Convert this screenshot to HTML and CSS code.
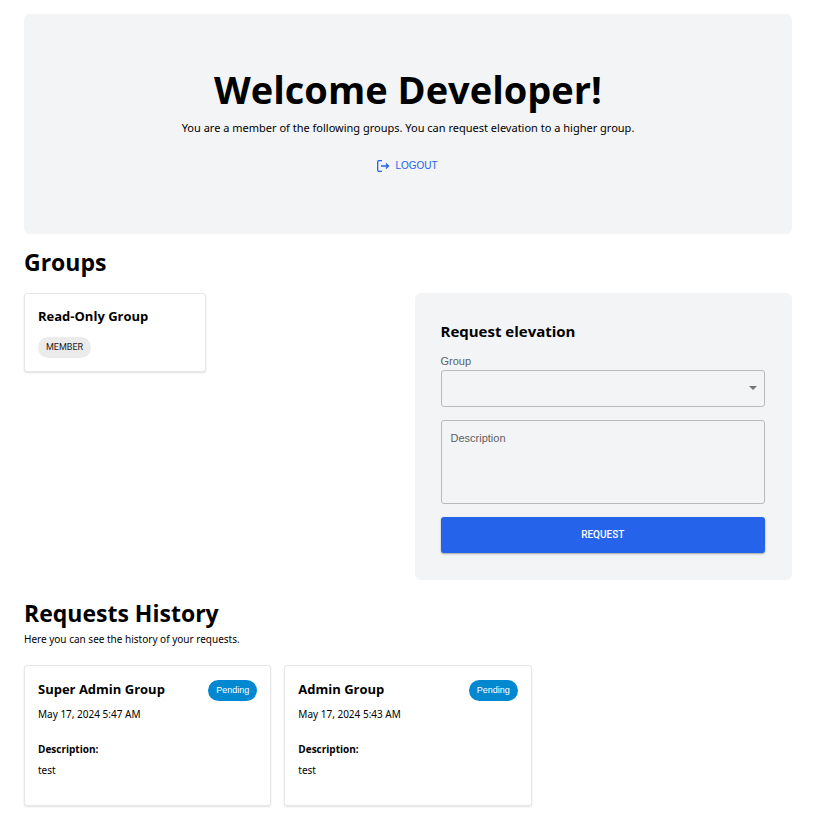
FILE: index.html
```html
<!DOCTYPE html>
<html lang="en">
<head>
  <meta charset="utf-8">
  <meta name="viewport" content="width=device-width, initial-scale=1">
  <title>Welcome Developer!</title>
  <link rel="stylesheet" href="styles.css">
</head>
<body>
  <main class="page">
    <header class="hero">
      <h1 class="hero-title">Welcome Developer!</h1>
      <p class="hero-text">You are a member of the following groups. You can request elevation to a higher group.</p>
      <button class="logout" type="button">
        <svg class="logout-icon" viewBox="0 0 14 14" aria-hidden="true">
          <path d="M6 1.7H2.7Q1.7 1.7 1.7 2.7V11.3Q1.7 12.3 2.7 12.3H6M5 7H12.6M9.9 4.5L12.5 7L9.9 9.5"/>
        </svg>
        LOGOUT
      </button>
    </header>

    <section class="groups">
      <h2 class="section-title">Groups</h2>
      <div class="groups-layout">
        <div class="group-list">
          <article class="card">
            <h3 class="card-title">Read-Only Group</h3>
            <span class="chip chip-member">MEMBER</span>
          </article>
        </div>
        <form class="panel">
          <h3 class="panel-title">Request elevation</h3>
          <label class="field-label" for="group">Group</label>
          <div class="select-wrap">
            <select class="field select" id="group">
              <option value=""></option>
            </select>
            <svg class="select-arrow" viewBox="0 0 8 4" aria-hidden="true"><path d="M0 0H8L4 4Z"/></svg>
          </div>
          <textarea class="field description" placeholder="Description" aria-label="Description"></textarea>
          <button class="submit" type="submit">REQUEST</button>
        </form>
      </div>
    </section>

    <section class="history">
      <h2 class="section-title">Requests History</h2>
      <p class="history-text">Here you can see the history of your requests.</p>
      <div class="history-list">
        <article class="card request">
          <div class="request-head">
            <h3 class="card-title">Super Admin Group</h3>
            <span class="chip chip-pending">Pending</span>
          </div>
          <time class="request-date" datetime="2024-05-17T05:47">May 17, 2024 5:47 AM</time>
          <h4 class="request-label">Description:</h4>
          <p class="request-text">test</p>
        </article>
        <article class="card request">
          <div class="request-head">
            <h3 class="card-title">Admin Group</h3>
            <span class="chip chip-pending">Pending</span>
          </div>
          <time class="request-date" datetime="2024-05-17T05:43">May 17, 2024 5:43 AM</time>
          <h4 class="request-label">Description:</h4>
          <p class="request-text">test</p>
        </article>
      </div>
    </section>
  </main>
</body>
</html>
```
FILE: styles.css
```css
* {
  box-sizing: border-box;
}

body,
h1,
h2,
h3,
h4,
p {
  margin: 0;
}

body {
  background: #fff;
  color: #000;
  font-family: "Noto Sans", sans-serif;
  font-size: 10px;
  line-height: 20px;
}

h1,
h2,
h3,
h4 {
  font-family: "Open Sans", sans-serif;
}

button,
select,
textarea,
.chip,
.field-label {
  font-family: "Liberation Sans", Arial, sans-serif;
}

.page {
  padding: 14px 42px 24px 24px;
}

.hero {
  display: flex;
  flex-direction: column;
  align-items: center;
  padding: 49px 24px;
  min-height: 220px;
  border-radius: 6px;
  background: #f3f4f6;
  text-align: center;
}

.hero-title {
  font-size: 38px;
  line-height: 52px;
  font-weight: 700;
}

.hero-text {
  margin-top: 3px;
  font-size: 11px;
  line-height: 20px;
}

.logout {
  display: flex;
  align-items: center;
  gap: 5px;
  margin-top: 15px;
  padding: 4px 6px 4px 4px;
  border: 0;
  background: none;
  color: #2563eb;
  font-size: 10px;
  line-height: 18px;
}

.logout-icon {
  width: 14px;
  height: 14px;
  fill: none;
  stroke: currentColor;
  stroke-width: 1.3;
}

.section-title {
  font-size: 23px;
  line-height: 32px;
  font-weight: 700;
}

.groups {
  margin-top: 12px;
}

.groups-layout {
  display: grid;
  grid-template-columns: 1fr 1fr;
  gap: 13px;
  align-items: start;
  margin-top: 15px;
}

.group-list {
  display: grid;
  grid-template-columns: 1fr 1fr;
  gap: 13px;
}

.card {
  padding: 13px;
  border: 1px solid #e5e7eb;
  border-radius: 3px;
  background: #fff;
  box-shadow: 0 1px 2px rgba(0, 0, 0, 0.12);
}

.card-title {
  font-size: 13px;
  line-height: 18px;
  font-weight: 700;
}

.chip {
  padding: 0 8px;
  border-radius: 11px;
  font-size: 9px;
  line-height: 21px;
}

.chip-member {
  display: block;
  width: fit-content;
  margin-top: 12px;
  background: #ebebeb;
  color: #212121;
  font-family: Roboto, sans-serif;
}

.chip-pending {
  background: #0288d1;
  color: #fff;
}

.panel {
  padding: 26px 27px 27px 26px;
  border-radius: 6px;
  background: #f3f4f6;
}

.panel-title {
  font-size: 15px;
  line-height: 24px;
  font-weight: 700;
}

.field-label {
  display: block;
  margin-top: 10px;
  color: #5e5f60;
  font-size: 11px;
  line-height: 16px;
}

.field {
  display: block;
  width: 100%;
  border: 1px solid #b9babc;
  border-radius: 3px;
  background: transparent;
  color: #212121;
  font-size: 11px;
}

.select-wrap {
  position: relative;
  margin-top: 1px;
}

.select {
  appearance: none;
  height: 37px;
  padding: 0 26px 0 9px;
}

.select-arrow {
  position: absolute;
  top: 16px;
  right: 8px;
  width: 8px;
  height: 4px;
  fill: #757575;
  pointer-events: none;
}

.description {
  height: 84px;
  margin-top: 13px;
  padding: 9px;
  line-height: 16px;
  resize: none;
}

.description::placeholder {
  color: #5e5f60;
}

.submit {
  display: block;
  width: 100%;
  margin-top: 13px;
  padding: 0;
  border: 0;
  border-radius: 3px;
  background: #2563eb;
  box-shadow: 0 1px 2px rgba(0, 0, 0, 0.35);
  color: #fff;
  font-family: Roboto, sans-serif;
  font-size: 10px;
  font-weight: 500;
  line-height: 36px;
}

.history {
  margin-top: 17px;
}

.history-list {
  display: grid;
  grid-template-columns: repeat(3, 1fr);
  gap: 13px;
  margin-top: 16px;
}

.request {
  min-height: 141px;
  padding: 14px 13px;
}

.request-head {
  display: flex;
  justify-content: space-between;
  align-items: flex-start;
}

.request-date {
  display: block;
  margin-top: 3px;
}

.request-label {
  margin-top: 15px;
  font-size: 10px;
  font-weight: 700;
}

.request-text {
  margin-top: 1px;
}
```
